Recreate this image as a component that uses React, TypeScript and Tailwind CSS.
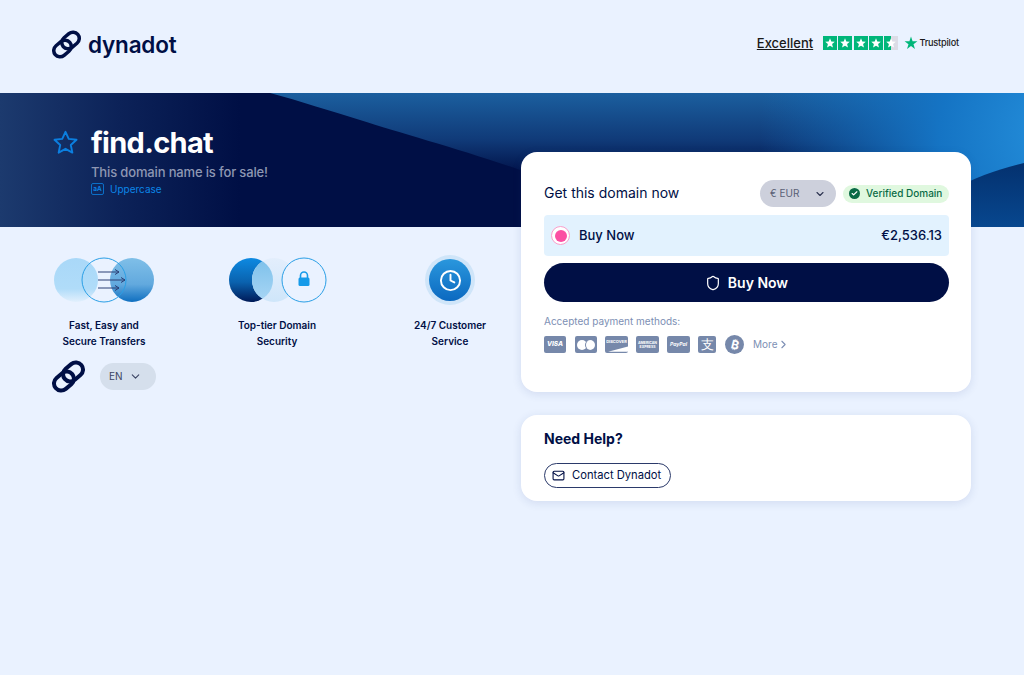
import React from 'react';
import { ChevronDown, ChevronRight, Shield, Mail, Clock, Check } from 'lucide-react';

const font = { fontFamily: 'Inter, "Liberation Sans", sans-serif' };

const ChainLogo = ({ className }: { className: string }) => (
  <svg viewBox="0 0 29 29" fill="none" className={className}>
    <rect x="9" y="4.200" width="19" height="12.600" rx="6.300" transform="rotate(-40 18.500 10.500)" stroke="#000f45" strokeWidth="3.500" />
    <rect x="1" y="12.200" width="19" height="12.600" rx="6.300" transform="rotate(-40 10.500 18.500)" stroke="#000f45" strokeWidth="3.500" />
  </svg>
);

const StarBox = ({ half }: { half?: boolean }) => (
  <div className="relative w-[14px] h-[14px] bg-[#dcdce6] overflow-hidden">
    <div className={half ? 'absolute inset-y-0 left-0 w-[7px] bg-[#00b67a]' : 'absolute inset-0 bg-[#00b67a]'} />
    <svg viewBox="0 0 24 24" className="absolute inset-0 w-[14px] h-[14px]">
      <path d="M12 4l2.200 5.600 6 .4-4.600 3.800 1.500 5.900L12 16.500l-5.100 3.200 1.500-5.900L3.800 10l6-.4z" fill="#fff" />
    </svg>
  </div>
);

const TransferArt = () => (
  <svg viewBox="0 0 102 46" className="w-[102px] h-[46px]">
    <defs>
      <linearGradient id="ta" x1="0" y1="0" x2="0" y2="1">
        <stop offset="0" stopColor="#a9d8f8" />
        <stop offset="0.7" stopColor="#b0dcf9" />
        <stop offset="1" stopColor="#e2f0fd" />
      </linearGradient>
      <linearGradient id="tb" x1="0" y1="0" x2="0" y2="1">
        <stop offset="0" stopColor="#7fbfe8" />
        <stop offset="0.6" stopColor="#62a9de" />
        <stop offset="1" stopColor="#0f6fc0" />
      </linearGradient>
    </defs>
    <circle cx="23" cy="23" r="22" fill="url(#ta)" />
    <circle cx="79" cy="23" r="22" fill="url(#tb)" />
    <circle cx="51" cy="23" r="22" fill="none" stroke="#2a9fe6" strokeWidth="1" />
    <path d="M45 15h21M62 12.500l4 2.500-4 2.500M45 23h27M68 20.500l4 2.500-4 2.500M45 31h21M62 28.500l4 2.500-4 2.500" fill="none" stroke="#2b3f75" strokeWidth="1" />
  </svg>
);

const SecurityArt = () => (
  <svg viewBox="0 0 98 46" className="w-[98px] h-[46px] ml-[1px]">
    <defs>
      <linearGradient id="sa" x1="0" y1="0" x2="0" y2="1">
        <stop offset="0" stopColor="#0d8ae2" />
        <stop offset="0.55" stopColor="#0a62ae" />
        <stop offset="1" stopColor="#001a58" />
      </linearGradient>
      <linearGradient id="sb" x1="0" y1="0" x2="0" y2="1">
        <stop offset="0" stopColor="#e3eefc" />
        <stop offset="1" stopColor="#cfe6fa" />
      </linearGradient>
      <linearGradient id="sc" x1="0" y1="0" x2="0" y2="1">
        <stop offset="0" stopColor="#7cc0ea" />
        <stop offset="1" stopColor="#a9d6f5" />
      </linearGradient>
      <clipPath id="sclip"><circle cx="22" cy="23" r="22" /></clipPath>
    </defs>
    <circle cx="22" cy="23" r="22" fill="url(#sa)" />
    <circle cx="45" cy="23" r="22" fill="url(#sb)" />
    <circle cx="45" cy="23" r="22" fill="url(#sc)" clipPath="url(#sclip)" />
    <circle cx="75" cy="23" r="22" fill="#eaf2ff" stroke="#2a9fe6" strokeWidth="1" />
    <path d="M71.500 21v-2.500a3.500 3.500 0 0 1 7 0V21" fill="none" stroke="#159ae9" strokeWidth="1.600" />
    <rect x="69.500" y="20.500" width="11" height="8.500" rx="1.500" fill="#159ae9" />
  </svg>
);

const Feature = ({ art, lines }: { art: React.ReactNode; lines: string[] }) => (
  <div className="w-[104px] flex flex-col items-center">
    <div className="h-[50px] flex items-center justify-center">{art}</div>
    <div className="mt-[12px] text-[10px] leading-[16px] font-semibold text-[#000f45] text-center whitespace-nowrap">
      {lines.map((l) => (
        <div key={l}>{l}</div>
      ))}
    </div>
  </div>
);

const PayCard = ({ children, className = '' }: { children?: React.ReactNode; className?: string }) => (
  <div className={`relative h-[17px] rounded-[2px] bg-[#7688aa] flex items-center justify-center overflow-hidden text-white ${className}`}>
    {children}
  </div>
);

export default function App() {
  return (
    <div className="min-h-[675px] bg-[#eaf2ff] text-[#000f45]" style={font}>
      <header className="h-[93px] px-[52px] flex items-start justify-between">
        <div className="flex items-center gap-[7px] mt-[29px]">
          <ChainLogo className="w-[29px] h-[29px]" />
          <span className="text-[22.500px] leading-[30px] mt-[1px] font-semibold tracking-[-0.2px]">dynadot</span>
        </div>
        <div className="flex items-center mt-[34px] mr-[13px]">
          <span className="text-[13px] leading-[18px] font-medium underline text-[#191919]">Excellent</span>
          <div className="flex gap-[1.300px] ml-[10px]">
            <StarBox />
            <StarBox />
            <StarBox />
            <StarBox />
            <StarBox half />
          </div>
          <svg viewBox="0 0 24 24" className="w-[14px] h-[14px] ml-[6px]">
            <path d="M12 1l2.700 8.200H23l-6.700 4.900 2.500 8.100L12 17.200l-6.800 5 2.500-8.100L1 9.200h8.300z" fill="#00b67a" />
          </svg>
          <span className="text-[9.200px] leading-[14px] font-medium text-[#191919] tracking-[-0.2px] ml-[1px]">Trustpilot</span>
        </div>
      </header>

      <section className="relative h-[134px] bg-[#000f45] overflow-hidden">
        <svg viewBox="0 0 1024 134" preserveAspectRatio="none" className="absolute inset-0 w-full h-full">
          <defs>
            <linearGradient id="heroLeft" x1="0" y1="0" x2="1" y2="0">
              <stop offset="0" stopColor="#1c3a6e" />
              <stop offset="0.5" stopColor="#0c2258" />
              <stop offset="1" stopColor="#000f45" />
            </linearGradient>
            <linearGradient id="heroWave" x1="0" y1="0" x2="0" y2="1">
              <stop offset="0" stopColor="#1b5f9f" />
              <stop offset="0.35" stopColor="#103a78" />
              <stop offset="0.62" stopColor="#000f45" />
            </linearGradient>
            <radialGradient id="heroGlow" gradientUnits="userSpaceOnUse" cx="1060" cy="40" r="300">
              <stop offset="0" stopColor="#2590dc" />
              <stop offset="0.4" stopColor="#1574c4" />
              <stop offset="1" stopColor="#136fbe" stopOpacity="0" />
            </radialGradient>
            <linearGradient id="heroLow" x1="0" y1="0" x2="0" y2="1">
              <stop offset="0" stopColor="#04316f" />
              <stop offset="1" stopColor="#07478f" />
            </linearGradient>
          </defs>
          <rect x="0" y="0" width="240" height="134" fill="url(#heroLeft)" />
          <path d="M270 0C300 8 330 18 360 27C400 40 460 56 520 77C560 92 600 112 640 134H1024V0Z" fill="url(#heroWave)" />
          <path d="M270 0C300 8 330 18 360 27C400 40 460 56 520 77C560 92 600 112 640 134H1024V0Z" fill="url(#heroGlow)" />
          <path d="M1024 70C1000 76 975 84 950 98L900 134H1024Z" fill="url(#heroLow)" />
        </svg>
        <div className="relative px-[52px] pt-[31px]">
          <div className="flex items-center gap-[12px]">
            <svg viewBox="0 0 24 24" fill="none" className="w-[27px] h-[27px] -mt-[1px]">
              <path d="M12 2.500l2.900 6.300 6.900.8-5.100 4.600 1.400 6.800L12 17.600 5.900 21l1.400-6.800-5.100-4.600 6.900-.8z" stroke="#0b7fe0" strokeWidth="1.700" strokeLinejoin="round" />
            </svg>
            <h1 className="text-[29px] leading-[38px] font-bold text-white tracking-[-0.7px]">find.chat</h1>
          </div>
          <div className="ml-[39px]">
            <p className="text-[13px] leading-[18px] mt-[1px] font-medium text-[#8e97b3] tracking-[-0.15px]">This domain name is for sale!</p>
            <div className="flex items-center gap-[6px] mt-[1px]">
              <span className="w-[13px] h-[12px] border border-[#0b6fc7] rounded-[2px] text-[6.500px] leading-[10px] font-semibold text-[#0b86e8] text-center">aA</span>
              <span className="text-[10px] leading-[14px] text-[#0b86e8]">Uppercase</span>
            </div>
          </div>
        </div>
      </section>

      <main className="flex justify-between pl-[52px] pr-[53px]">
        <div>
          <div className="flex gap-[69px] pt-[28px]">
            <Feature art={<TransferArt />} lines={['Fast, Easy and', 'Secure Transfers']} />
            <Feature art={<SecurityArt />} lines={['Top-tier Domain', 'Security']} />
            <Feature
              art={
                <div className="w-[50px] h-[50px] rounded-full bg-[#cfe5f9] flex items-center justify-center">
                  <div className="w-[42px] h-[42px] rounded-full bg-gradient-to-b from-[#2a97dd] to-[#0b69c0] flex items-center justify-center">
                    <Clock className="w-[23px] h-[23px] text-white" strokeWidth={2} />
                  </div>
                </div>
              }
              lines={['24/7 Customer', 'Service']}
            />
          </div>
          <div className="flex items-center gap-[15px] mt-[11px]">
            <ChainLogo className="w-[33px] h-[33px]" />
            <div className="w-[56px] h-[27px] rounded-full bg-[#d5dfec] flex items-center pl-[9px] gap-[6px] text-[10px] text-[#3b4463]">
              EN
              <ChevronDown className="w-[13px] h-[13px]" strokeWidth={2} />
            </div>
          </div>
        </div>

        <div className="w-[450px] -mt-[75px] relative flex flex-col gap-[23px]">
          <div className="h-[240px] bg-white rounded-[16px] pl-[23px] pr-[22px] pt-[28px] shadow-[0_2px_10px_rgba(30,60,130,0.12)]">
            <div className="flex items-center h-[27px]">
              <span className="text-[14px] leading-[20px] -mt-[1px] text-[#000f45]">Get this domain now</span>
              <div className="ml-auto w-[76px] h-[27px] rounded-full bg-[#cdd0dc] flex items-center pl-[10px] text-[10px] text-[#5a6076]">
                € EUR
                <ChevronDown className="w-[12px] h-[12px] ml-[15px] text-[#2c3350]" strokeWidth={2.200} />
              </div>
              <div className="ml-[7px] w-[106px] h-[18px] rounded-full bg-[#e0f8df] flex items-center pl-[6px] gap-[6px] text-[10px] font-medium text-[#0a6b46] whitespace-nowrap">
                <span className="w-[11px] h-[11px] rounded-full bg-[#0a6b46] flex items-center justify-center">
                  <Check className="w-[7px] h-[7px] text-white" strokeWidth={4} />
                </span>
                Verified Domain
              </div>
            </div>
            <div className="mt-[8px] h-[41px] rounded-[4px] bg-[#e2f2fe] flex items-center pl-[7px] pr-[7px]">
              <span className="w-[19px] h-[19px] rounded-full bg-white border border-[#fb9fcb] flex items-center justify-center">
                <span className="w-[12px] h-[12px] rounded-full bg-[#fb4fa3]" />
              </span>
              <span className="ml-[9px] text-[13px] font-medium">Buy Now</span>
              <span className="ml-auto text-[13px] font-medium">€2,536.13</span>
            </div>
            <button className="mt-[7px] w-full h-[39px] rounded-full bg-[#000f45] flex items-center justify-center gap-[7px] text-white text-[14px] font-semibold">
              <Shield className="w-[16px] h-[16px]" strokeWidth={1.800} />
              Buy Now
            </button>
            <p className="mt-[12px] text-[10px] leading-[14px] text-[#7d8fb4]">Accepted payment methods:</p>
            <div className="flex items-center mt-[7px] h-[19px]">
              <PayCard className="w-[22px] text-[6.500px] font-extrabold italic">VISA</PayCard>
              <PayCard className="w-[22px] ml-[9px]">
                <span className="w-[10px] h-[10px] rounded-full bg-white -mr-[1px]" />
                <span className="w-[10px] h-[10px] rounded-full bg-white border-l border-[#7688aa] -ml-[1px]" />
              </PayCard>
              <PayCard className="w-[23px] ml-[8px] text-[4px] font-bold items-start pt-[3px]">
                DISCOVER
                <svg viewBox="0 0 22 17" className="absolute inset-0">
                  <path d="M3 15L22 10V15Z" fill="#fff" />
                </svg>
              </PayCard>
              <PayCard className="w-[23px] ml-[8px] text-[3.500px] font-bold leading-[4px] text-center">AMERICAN<br />EXPRESS</PayCard>
              <PayCard className="w-[23px] ml-[8px] text-[5px] font-bold italic">PayPal</PayCard>
              <PayCard className="ml-[8px] w-[18px] text-[13px]">支</PayCard>
              <span className="ml-[9px] w-[19px] h-[19px] rounded-full bg-[#7688aa] flex items-center justify-center text-white text-[12px] font-bold">
                <span className="rotate-[14deg]">₿</span>
              </span>
              <span className="ml-[9px] text-[10px] text-[#7d8fb4]">More</span>
              <ChevronRight className="w-[13px] h-[13px] text-[#7d8fb4]" />
            </div>
          </div>

          <div className="h-[86px] bg-white rounded-[16px] px-[23px] pt-[14px] shadow-[0_2px_10px_rgba(30,60,130,0.12)]">
            <h3 className="text-[14px] leading-[20px] font-bold">Need Help?</h3>
            <a className="mt-[14px] inline-flex items-center h-[25px] w-[127px] rounded-full border border-[#2b3a6a] pl-[7px] gap-[7px] text-[11.200px] text-[#000f45] whitespace-nowrap">
              <Mail className="w-[13px] h-[13px]" strokeWidth={2} />
              Contact Dynadot
            </a>
          </div>
        </div>
      </main>
    </div>
  );
}
